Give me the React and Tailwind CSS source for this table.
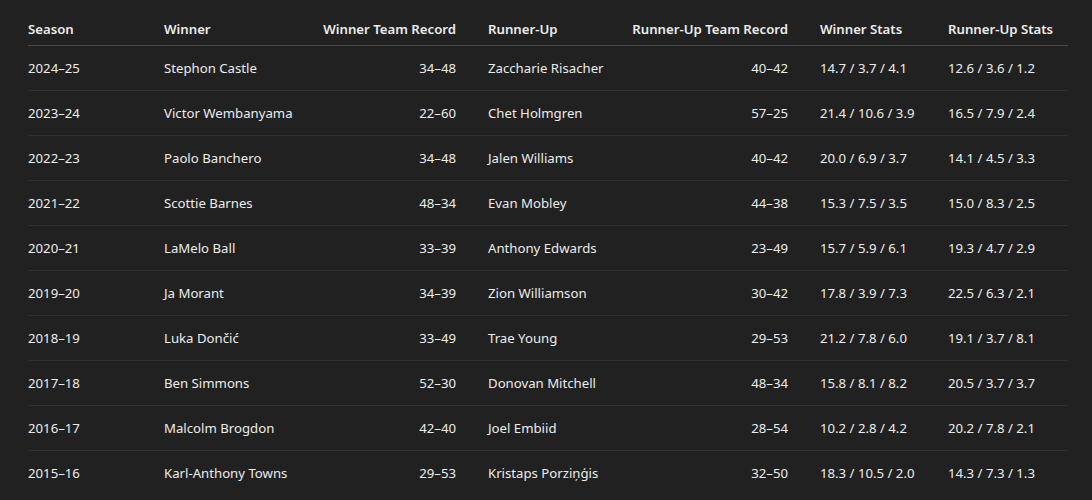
const rows = [
  ["2024–25", "Stephon Castle", "34–48", "Zaccharie Risacher", "40–42", "14.7 / 3.7 / 4.1", "12.6 / 3.6 / 1.2"],
  ["2023–24", "Victor Wembanyama", "22–60", "Chet Holmgren", "57–25", "21.4 / 10.6 / 3.9", "16.5 / 7.9 / 2.4"],
  ["2022–23", "Paolo Banchero", "34–48", "Jalen Williams", "40–42", "20.0 / 6.9 / 3.7", "14.1 / 4.5 / 3.3"],
  ["2021–22", "Scottie Barnes", "48–34", "Evan Mobley", "44–38", "15.3 / 7.5 / 3.5", "15.0 / 8.3 / 2.5"],
  ["2020–21", "LaMelo Ball", "33–39", "Anthony Edwards", "23–49", "15.7 / 5.9 / 6.1", "19.3 / 4.7 / 2.9"],
  ["2019–20", "Ja Morant", "34–39", "Zion Williamson", "30–42", "17.8 / 3.9 / 7.3", "22.5 / 6.3 / 2.1"],
  ["2018–19", "Luka Dončić", "33–49", "Trae Young", "29–53", "21.2 / 7.8 / 6.0", "19.1 / 3.7 / 8.1"],
  ["2017–18", "Ben Simmons", "52–30", "Donovan Mitchell", "48–34", "15.8 / 8.1 / 8.2", "20.5 / 3.7 / 3.7"],
  ["2016–17", "Malcolm Brogdon", "42–40", "Joel Embiid", "28–54", "10.2 / 2.8 / 4.2", "20.2 / 7.8 / 2.1"],
  ["2015–16", "Karl-Anthony Towns", "29–53", "Kristaps Porziņģis", "32–50", "18.3 / 10.5 / 2.0", "14.3 / 7.3 / 1.3"],
];

const headers = ["Season", "Winner", "Winner Team Record", "Runner-Up", "Runner-Up Team Record", "Winner Stats", "Runner-Up Stats"];
const widths = ["w-[120px]", "w-[152px]", "w-[172px]", "w-[140px]", "w-[192px]", "w-[128px]", "w-[136px]"];
const align = ["text-left", "text-left", "text-right", "text-left", "text-right", "text-left", "text-left"];
const pad = ["pl-0 pr-4", "px-4", "px-4", "px-4", "px-4", "px-4", "pl-4 pr-0"];

export default function App() {
  return (
    <div className="min-h-[500px] bg-[#212121] text-[#ececec] pl-[28px] pt-[13px] overflow-hidden" style={{ fontFamily: '"Noto Sans", "Open Sans", sans-serif' }}>
      <table className="table-fixed border-collapse w-[1040px] text-[13.2px] leading-[20px]">
        <colgroup>
          {widths.map((w, i) => (
            <col key={i} className={w} />
          ))}
        </colgroup>
        <thead>
          <tr className="border-b border-[#4a4a4a]">
            {headers.map((h, i) => (
              <th key={i} className={`font-semibold py-[6px] whitespace-nowrap ${align[i]} ${pad[i]}`}>{h}</th>
            ))}
          </tr>
        </thead>
        <tbody>
          {rows.map((r, ri) => (
            <tr key={ri} className={ri < rows.length - 1 ? "border-b border-[#303030]" : ""}>
              {r.map((c, i) => (
                <td key={i} className={`py-3 whitespace-nowrap ${align[i]} ${pad[i]}`}>{c}</td>
              ))}
            </tr>
          ))}
        </tbody>
      </table>
    </div>
  );
}
